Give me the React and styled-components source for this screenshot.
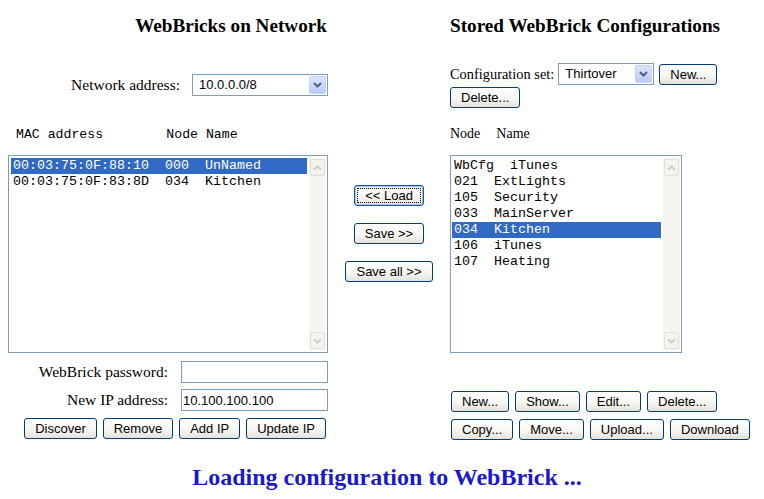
import React from 'react'
import styled, { createGlobalStyle, css } from 'styled-components'

const Global = createGlobalStyle`
    body {
        margin: 0;
        background: #fff;
        color: #000;
        font-family: "Liberation Serif", "Times New Roman", serif;
    }
`

export const Page = styled.div`
    padding: 15px 8px 0;
`

export const Columns = styled.div`
    display: grid;
    grid-template-columns: 320px 122px 298px;
    grid-template-rows: 22px 75px 43px 198px auto;
`

export const Title = styled.h3`
    margin: 0;
    font-size: 19.2px;
    line-height: 22px;
    font-weight: bold;
    white-space: nowrap;
    text-align: ${p => p.$right ? 'right' : 'left'};
    padding-right: ${p => p.$right ? '1px' : '0'};
`

export const Label = styled.span`
    font-size: ${p => p.$size || 15.5}px;
    line-height: 18px;
    white-space: nowrap;
    justify-self: end;
`

export const Controls = styled.div`
    display: flex;
    flex-wrap: wrap;
    align-items: center;
    align-content: flex-start;
    justify-content: ${p => p.$end ? 'flex-end' : 'flex-start'};
    column-gap: ${p => p.$end ? '12px' : '4px'};
    row-gap: 2px;
    padding-top: ${p => p.$top}px;
`

export const SelectBox = styled.div`
    box-sizing: border-box;
    width: ${p => p.$w}px;
    height: 22px;
    border: 1px solid #7f9db9;
    padding: 1px;
    display: flex;
    align-items: stretch;
    font-family: "Liberation Sans", Arial, sans-serif;
    font-size: 13px;
    background: #fff;
`

export const SelectValue = styled.span`
    flex: 1;
    padding-left: 5px;
    line-height: 18px;
`

export const SelectArrow = styled.span`
    box-sizing: border-box;
    width: 17px;
    border: 1px solid #c3d3f7;
    border-radius: 2px;
    background: linear-gradient(#dce6fe, #b8cbf6);
    display: flex;
    align-items: center;
    justify-content: center;
`

export const Button = styled.button`
    box-sizing: border-box;
    height: 21px;
    padding: 0 10px;
    border: 1px solid #003c74;
    border-radius: 3px;
    background: linear-gradient(#ffffff 0%, #f7f6f2 55%, #e4e2da 100%);
    font-family: "Liberation Sans", Arial, sans-serif;
    font-size: 13px;
    line-height: 19px;
    color: #000;
    white-space: nowrap;
    ${p => p.$focus && css`
        border-color: #1c4fa8;
        box-shadow: inset 0 0 0 1px #a9c3ee;
        outline: 1px dotted #000;
        outline-offset: -4px;
    `}
`

export const MonoHeader = styled.div`
    padding: 15px 0 0 8px;
    font-family: "Liberation Mono", "Courier New", monospace;
    font-size: 13.2px;
    line-height: 16px;
    white-space: pre;
`

export const SerifHeader = styled.div`
    padding-top: 14px;
    font-size: 14px;
    line-height: 16px;
    display: flex;
    gap: 16px;
`

export const ListBox = styled.div`
    box-sizing: border-box;
    width: ${p => p.$w}px;
    height: 198px;
    border: 1px solid #7f9db9;
    padding: 2px 1px 2px ${p => p.$pl}px;
    display: flex;
    gap: 2px;
    background: #fff;
`

export const Rows = styled.div`
    flex: 1;
`

export const Row = styled.div`
    height: 16px;
    line-height: 16px;
    padding-left: 2px;
    font-family: "Liberation Mono", "Courier New", monospace;
    font-size: 13.33px;
    white-space: pre;
    background: ${p => p.$sel ? '#316ac5' : 'transparent'};
    color: ${p => p.$sel ? '#fff' : '#000'};
`

export const ScrollBar = styled.div`
    width: 17px;
    background: #f5f4ef;
    display: flex;
    flex-direction: column;
    justify-content: space-between;
`

export const ScrollButton = styled.div`
    box-sizing: border-box;
    height: 17px;
    margin: 1px;
    border: 1px solid #e2e1d9;
    border-radius: 2px;
    background: #f4f3ee;
    display: flex;
    align-items: center;
    justify-content: center;
`

export const MidButtons = styled.div`
    display: flex;
    flex-direction: column;
    align-items: center;
    gap: 17px;
    padding-top: 30px;
`

export const Form = styled.div`
    padding-top: 8px;
    display: grid;
    grid-template-columns: auto 147px;
    justify-content: end;
    align-items: center;
    column-gap: 13px;
    row-gap: 6px;
`

export const TextInput = styled.input`
    box-sizing: border-box;
    width: 147px;
    height: 22px;
    border: 1px solid #7f9db9;
    padding: 0 1px;
    font-family: "Liberation Sans", Arial, sans-serif;
    font-size: 13px;
    outline: none;
`

export const ButtonRow = styled.div`
    display: flex;
    gap: 6px;
    justify-content: ${p => p.$end ? 'flex-end' : 'flex-start'};
    padding-right: ${p => p.$end ? '2px' : '0'};
    margin-top: ${p => p.$top}px;
    padding-left: ${p => p.$end ? '0' : '1px'};
`

export const Status = styled.h2`
    margin: 23px 0 0;
    padding-left: 10px;
    text-align: center;
    font-size: 24px;
    line-height: 28px;
    font-weight: bold;
    color: #1a1acc;
`

const Chevron = ({ up, color, w = 2 }) => (
    <svg width="9" height="6" viewBox="0 0 9 6">
        <path d={up ? 'M1 5 L4.5 1.5 L8 5' : 'M1 1 L4.5 4.5 L8 1'} fill="none" stroke={color} strokeWidth={w} />
    </svg>
)

const Select = ({ w, value }) => (
    <SelectBox $w={w}>
        <SelectValue>{value}</SelectValue>
        <SelectArrow><Chevron color="#4d6185" /></SelectArrow>
    </SelectBox>
)

const List = ({ w, pl, rows, sel }) => (
    <ListBox $w={w} $pl={pl}>
        <Rows>
            {rows.map((r, i) => <Row key={i} $sel={i === sel}>{r}</Row>)}
        </Rows>
        <ScrollBar>
            <ScrollButton><Chevron up color="#c9c8be" w={1.6} /></ScrollButton>
            <ScrollButton><Chevron color="#c9c8be" w={1.6} /></ScrollButton>
        </ScrollBar>
    </ListBox>
)

const bricks = [
    '00:03:75:0F:88:10  000  UnNamed',
    '00:03:75:0F:83:8D  034  Kitchen',
]

const configs = [
    'WbCfg  iTunes',
    '021  ExtLights',
    '105  Security',
    '033  MainServer',
    '034  Kitchen',
    '106  iTunes',
    '107  Heating',
]

const App = () => {
    return (
        <Page>
            <Global />
            <Columns>
                <Title $right>WebBricks on Network</Title>
                <div />
                <Title>Stored WebBrick Configurations</Title>

                <Controls $end $top={37}>
                    <Label>Network address:</Label>
                    <Select w={136} value="10.0.0.0/8" />
                </Controls>
                <div />
                <Controls $top={26}>
                    <Label $size={14.4}>Configuration set:</Label>
                    <Select w={96} value="Thirtover" />
                    <Button style={{ marginLeft: 1 }}>New...</Button>
                    <Button>Delete...</Button>
                </Controls>

                <MonoHeader>{'MAC address        Node Name'}</MonoHeader>
                <div />
                <SerifHeader><span>Node</span><span>Name</span></SerifHeader>

                <List w={320} pl={2} rows={bricks} sel={0} />
                <MidButtons>
                    <Button $focus>{'<< Load'}</Button>
                    <Button>{'Save >>'}</Button>
                    <Button>{'Save all >>'}</Button>
                </MidButtons>
                <List w={232} pl={1} rows={configs} sel={4} />

                <div>
                    <Form>
                        <Label>WebBrick password:</Label>
                        <TextInput type="password" />
                        <Label>New IP address:</Label>
                        <TextInput type="text" defaultValue="10.100.100.100" />
                    </Form>
                    <ButtonRow $end $top={7}>
                        <Button>Discover</Button>
                        <Button>Remove</Button>
                        <Button>Add IP</Button>
                        <Button>Update IP</Button>
                    </ButtonRow>
                </div>
                <div />
                <div>
                    <ButtonRow $top={38}>
                        <Button>New...</Button>
                        <Button>Show...</Button>
                        <Button>Edit...</Button>
                        <Button>Delete...</Button>
                    </ButtonRow>
                    <ButtonRow $top={7}>
                        <Button>Copy...</Button>
                        <Button>Move...</Button>
                        <Button>Upload...</Button>
                        <Button>Download</Button>
                    </ButtonRow>
                </div>
            </Columns>
            <Status>Loading configuration to WebBrick ...</Status>
        </Page>
    )
}

export default App
